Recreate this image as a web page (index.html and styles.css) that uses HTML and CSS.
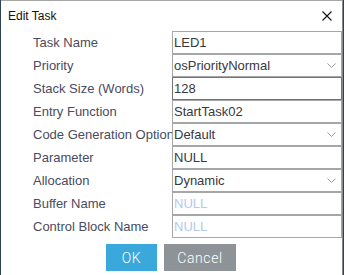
FILE: index.html
```html
<!DOCTYPE html>
<html lang="en">
<head>
    <meta charset="UTF-8">
    <title>Edit Task</title>
    <link rel="stylesheet" href="styles.css">
</head>
<body>
    <div class="dialog">
        <div class="titlebar">
            <span class="title">Edit Task</span>
            <button class="close" aria-label="Close">
                <svg width="10" height="10" viewBox="0 0 10 10">
                    <path d="M0.5 0.5 L9.5 9.5 M9.5 0.5 L0.5 9.5" stroke="#111" stroke-width="1.1" fill="none"></path>
                </svg>
            </button>
        </div>
        <div class="form">
            <label>Task Name</label>
            <div class="field">LED1</div>

            <label>Priority</label>
            <div class="field select">osPriorityNormal<span class="chevron"><svg width="9" height="5" viewBox="0 0 9 5"><path d="M0.5 0.5 L4.5 4.5 L8.5 0.5" stroke="#9a9a9a" fill="none"></path></svg></span></div>

            <label>Stack Size (Words)</label>
            <div class="field focused">128</div>

            <label>Entry Function</label>
            <div class="field">StartTask02</div>

            <label>Code Generation Option</label>
            <div class="field select">Default<span class="chevron"><svg width="9" height="5" viewBox="0 0 9 5"><path d="M0.5 0.5 L4.5 4.5 L8.5 0.5" stroke="#9a9a9a" fill="none"></path></svg></span></div>

            <label>Parameter</label>
            <div class="field">NULL</div>

            <label>Allocation</label>
            <div class="field select">Dynamic<span class="chevron"><svg width="9" height="5" viewBox="0 0 9 5"><path d="M0.5 0.5 L4.5 4.5 L8.5 0.5" stroke="#9a9a9a" fill="none"></path></svg></span></div>

            <label>Buffer Name</label>
            <div class="field placeholder">NULL</div>

            <label>Control Block Name</label>
            <div class="field placeholder">NULL</div>
        </div>
        <div class="actions">
            <button class="btn btn-ok">OK</button>
            <button class="btn btn-cancel">Cancel</button>
        </div>
    </div>
</body>
</html>
```

FILE: styles.css
```css
* {
  margin: 0;
  padding: 0;
  box-sizing: border-box;
}

body {
  font-family: 'Liberation Sans', Arial, sans-serif;
  background-color: #2c4650;
  width: 344px;
  height: 275px;
  overflow: hidden;
}

.dialog {
  margin-left: 1px;
  width: 342px;
  height: 275px;
  background-color: #fff;
  border-top: 1px solid #a8a8a8;
  border-right: 1px solid #8a8a8a;
}

.titlebar {
  display: flex;
  align-items: center;
  justify-content: space-between;
  height: 30px;
  padding-left: 7px;
}

.title {
  font-size: 12px;
  color: #111;
}

.close {
  display: flex;
  align-items: center;
  justify-content: center;
  width: 30px;
  height: 30px;
  background: transparent;
  border: none;
}

.form {
  display: grid;
  grid-template-columns: 139px 170px;
  grid-auto-rows: 23px;
  padding-left: 32px;
}

.form label {
  font-size: 13px;
  line-height: 23px;
  color: #4a4b5e;
  white-space: nowrap;
  overflow: hidden;
}

.field {
  position: relative;
  height: 23px;
  border: 1px solid #a4a6a8;
  font-size: 13px;
  line-height: 21px;
  padding-left: 1px;
  color: #383840;
  white-space: nowrap;
}

.field.focused {
  border-color: #727478;
}

.field.placeholder {
  color: #b4c8ec;
}

.chevron {
  position: absolute;
  right: 5px;
  top: 8px;
  display: flex;
}

.actions {
  display: flex;
  justify-content: center;
  gap: 7px;
  margin-top: 6px;
  padding-right: 1px;
}

.btn {
  height: 27px;
  border: none;
  font-family: Roboto, 'Liberation Sans', sans-serif;
  font-weight: 300;
  font-size: 14px;
  color: #fff;
  letter-spacing: 0.6px;
}

.btn-ok {
  width: 51px;
  background-color: #3aa8db;
}

.btn-cancel {
  width: 72px;
  background-color: #8e9398;
}
```
